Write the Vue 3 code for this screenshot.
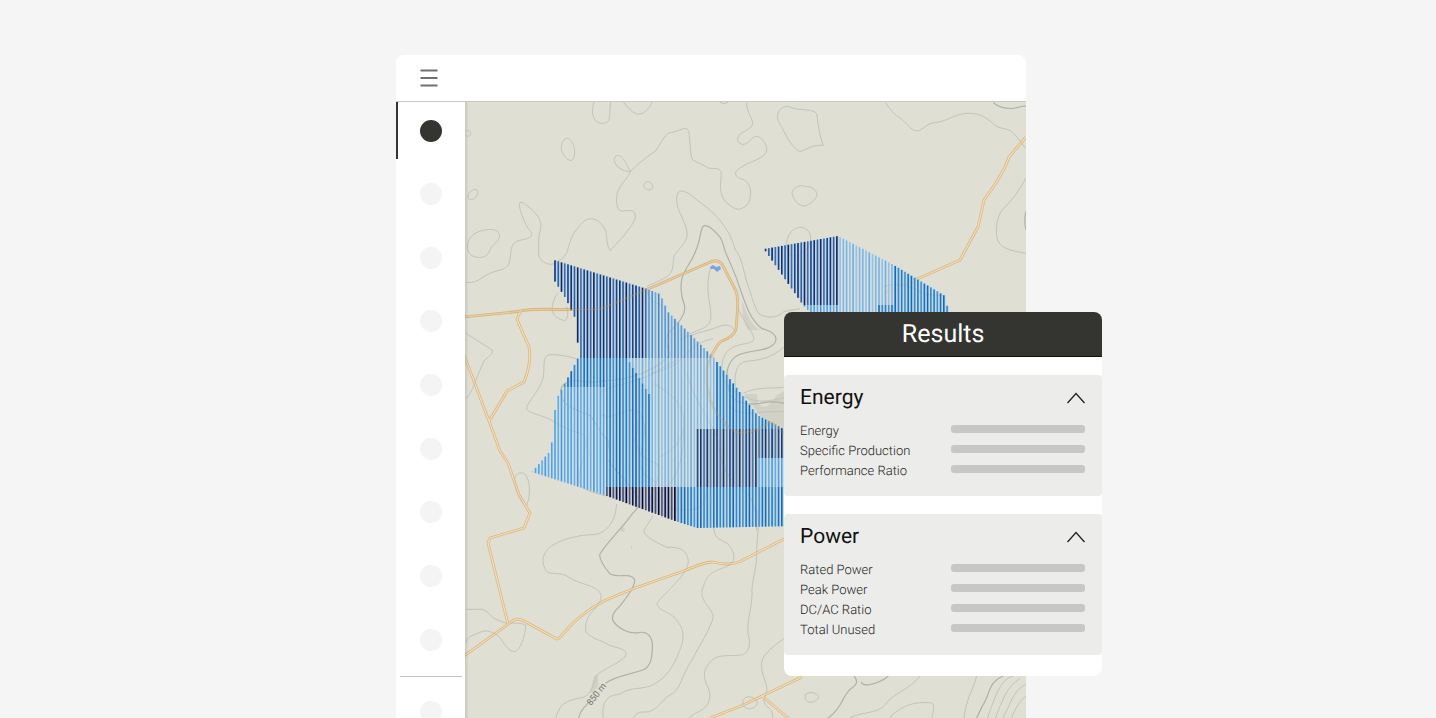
<script setup>
import { ref } from 'vue'

const tools = Array.from({ length: 9 }, (_, i) => i + 1)
const activeTool = ref(1)

const sections = ref([
  { id: 'energy', title: 'Energy', open: true, rows: ['Energy', 'Specific Production', 'Performance Ratio'] },
  { id: 'power', title: 'Power', open: true, rows: ['Rated Power', 'Peak Power', 'DC/AC Ratio', 'Total Unused'] },
])

// Contour tiles: map position of the tile origin, paths drawn at three units per map unit.
const contours = [
  {
    x: 460, y: 100,
    light: [
      'M402 6C396 24 395 44 404 58C414 73 436 74 446 62C452 48 448 28 452 6',
      'M490 6C502 20 512 36 530 42C548 46 568 28 576 6',
      'M780 6C788 12 798 12 804 6',
      'M304 146C304 128 312 114 322 115C336 118 344 138 344 156C344 172 338 184 330 181C318 177 306 162 304 146Z',
      'M551 258C552 248 560 243 568 246C578 250 581 260 576 267C570 272 555 270 551 258Z',
      'M24 288C26 278 38 266 48 269C58 274 52 288 44 294C34 302 24 302 24 288Z',
      'M18 94C24 88 32 92 32 100C32 108 24 112 18 106',
      'M22 442C20 420 38 398 66 392C88 386 112 386 118 402C124 422 96 432 90 450C82 470 70 474 52 472C34 470 24 460 22 442Z',
      'M18 547C50 552 60 534 90 520C112 510 132 512 144 496C156 474 148 450 160 432C174 416 200 422 213 409C220 396 206 392 198 374C186 352 174 314 180 308C186 302 208 322 220 334C234 348 246 362 242 384C234 408 236 440 236 468C244 488 268 498 284 490C302 478 314 474 320 458C328 436 330 420 340 402C354 382 370 360 386 357C406 352 426 368 436 390C442 410 440 440 450 451C458 446 478 422 492 406C506 388 528 362 526 348C524 322 500 334 484 333C468 330 469 300 471 282C478 254 506 232 512 214C536 190 560 170 586 154C600 136 608 112 624 100C642 96 656 92 670 86C690 82 687 102 689 120C692 142 690 164 698 180C714 190 728 192 744 204C762 208 778 200 784 218C784 244 778 262 784 280C790 306 820 328 838 328',
      'M512 214C496 216 474 206 466 190C458 174 468 162 480 168C498 180 500 200 512 214',
      'M840 102C831 110 831 126 840 130',
      'M840 204C830 210 826 216 827 222C828 228 834 233 840 236',
      'M560 560C590 544 618 536 630 522C644 504 636 478 646 462C664 440 674 430 680 414C688 388 664 352 654 324C646 296 650 272 666 273C688 276 708 300 732 316C764 340 790 370 808 402C816 420 822 436 826 450',
      'M752 504C746 520 744 540 744 558C742 590 756 630 752 660C744 690 702 690 672 712',
    ],
    dark: [
      'M708 450C724 416 720 378 734 377C748 376 766 394 782 414C790 430 792 440 794 450',
    ],
  },
  {
    x: 740, y: 100,
    light: [
      'M113 44C116 28 132 16 148 20C176 34 214 24 230 40C234 72 240 114 250 136C214 132 190 156 178 154C158 142 142 116 132 94C124 78 110 64 113 44Z',
      'M20 8C18 34 40 58 38 72C34 86 16 92 0 102',
      'M0 130C20 144 32 110 50 109C68 112 82 136 80 152C76 176 32 182 0 204',
      'M0 236C20 238 32 256 32 278C32 310 18 322 -2 328',
      'M156 278C160 262 180 254 194 259C216 258 234 274 231 286C224 304 204 318 190 318C172 316 158 294 156 278Z',
      'M140 430C140 406 160 380 184 382C208 386 218 406 208 434C198 460 170 474 150 466C142 454 138 444 140 430Z',
      'M436 8C452 30 466 46 480 54C498 66 514 94 532 93C550 90 560 68 586 68C626 62 650 40 682 40C724 38 744 58 766 76C784 90 806 82 820 100C836 114 846 132 858 146',
      'M858 234C838 270 818 300 790 326C770 350 768 380 770 410C776 446 812 452 858 460',
      'M428 560C470 548 510 554 540 576C570 592 600 582 616 590',
    ],
    dark: ['M760 8C778 22 804 28 826 24C838 20 850 18 858 18', 'M858 334C854 350 854 374 858 390'],
  },
  {
    x: 460, y: 250,
    light: [
      'M18 250C46 270 76 284 96 300C104 314 78 320 70 338C56 366 46 396 40 410C34 424 28 438 18 446',
      'M276 178C280 200 296 208 314 212C324 206 326 188 320 170',
      'M276 178C278 154 286 136 296 128',
      'M354 328C326 318 278 310 262 316C246 326 256 362 248 388C238 424 200 458 200 476C202 490 248 494 280 514C330 546 360 548 374 556C382 570 374 620 360 660C350 706 360 720 440 738',
      'M420 430C450 406 500 404 560 380C590 362 620 350 650 330',
      'M420 490C440 508 470 496 494 484C520 474 540 480 548 510C564 550 540 590 540 640C548 690 580 680 598 710',
      'M560 120C566 150 590 160 610 170',
    ],
    dark: [
      'M304 432C300 412 306 404 330 394C360 386 382 402 420 394C470 392 520 382 560 364C590 350 600 342 620 326',
      'M304 432C308 456 318 466 350 480C370 492 390 486 404 516C420 544 430 560 444 570C450 600 430 620 446 632',
    ],
  },
  {
    x: 620, y: 250,
    light: [
      'M346 0C364 18 370 60 380 94C394 134 400 162 414 188C434 208 474 204 490 186C506 180 520 180 540 176',
      'M354 176C376 222 398 244 402 266C400 284 360 278 334 294C308 312 304 340 306 366C310 400 340 434 400 450C430 458 460 450 492 444',
      'M346 410C342 370 350 338 380 334C420 330 450 326 492 292',
      'M180 270C220 250 260 244 290 232C318 220 336 224 346 246',
      'M370 430C410 410 450 416 492 412',
      'M330 470C370 508 420 478 492 486',
      'M200 370C210 410 230 450 260 500C280 540 300 570 300 610',
      'M100 400C150 430 180 450 190 500C200 550 170 600 120 620',
      'M94 370C140 362 180 340 210 300C230 280 260 270 280 266',
      'M30 480C60 500 60 540 40 580',
    ],
    dark: [
      'M228 0C218 30 200 50 192 70C178 96 182 136 194 168C198 204 160 230 142 256C126 292 166 304 140 326',
      'M314 0C330 40 346 70 356 104C376 160 390 210 426 236C456 244 474 256 466 276C446 310 380 296 346 320C318 346 318 374 324 406C326 456 370 468 420 460C450 454 474 454 492 460',
    ],
  },
  {
    x: 460, y: 430,
    light: [
      'M200 226C212 198 212 150 194 132C182 124 166 130 164 146C166 168 172 198 190 216',
      'M470 222C468 256 454 290 430 304C408 320 382 310 350 320C310 326 270 344 256 368C244 386 248 414 264 428C290 434 304 426 330 444C360 464 404 464 420 488C432 508 410 530 396 546C380 564 374 584 378 606C400 630 420 628 444 644C470 656 500 654 498 674C494 694 430 716 410 736C398 762 398 790 370 802C330 808 308 820 300 834L286 864',
      'M18 538L68 538C86 544 92 562 108 568C122 574 132 578 142 580C170 578 186 580 198 586C192 628 180 664 162 665C138 662 128 626 112 616C88 600 72 600 54 610C36 616 22 620 18 638',
      'M430 864C424 830 436 802 460 796L480 792',
    ],
    dark: [
      'M446 92C470 130 520 170 538 210C538 224 530 240 518 250C490 290 440 338 420 372C416 384 432 410 450 432C480 446 508 426 524 448C526 470 500 502 480 528C462 544 452 560 460 574C476 596 506 612 534 608C562 602 580 620 577 656C576 690 570 712 548 720C516 732 466 738 436 760',
      'M386 818C372 832 360 844 356 864',
    ],
  },
  {
    x: 620, y: 430,
    light: [
      'M100 256C84 284 72 294 72 308C90 330 120 342 140 352C178 350 204 360 205 396C204 436 120 500 110 522C120 548 150 540 174 576C200 610 186 644 178 664C162 708 140 742 100 764C70 780 30 770 0 792',
      'M282 290C280 324 300 328 322 340C346 366 348 390 330 404C300 422 264 418 250 470C232 510 274 528 280 560C272 596 242 640 216 690C184 736 182 784 148 796C120 814 118 834 86 846C66 846 50 844 40 864',
      'M410 240C420 270 412 310 410 360C412 410 398 440 396 480C398 530 380 570 384 610C392 640 390 662 370 674C340 680 304 672 282 686C246 714 252 740 258 760C270 780 274 800 264 820C250 846 218 848 208 864',
      'M492 626C460 650 422 674 424 710C430 750 444 764 440 786C428 810 430 822 444 832C456 840 458 850 458 864',
      'M372 806C382 796 410 800 412 820C406 842 372 842 368 822C368 814 370 808 372 806Z',
      'M556 794C570 782 592 788 596 802C588 820 562 822 556 806Z',
      'M190 0C194 80 170 150 130 180C110 220 140 240 200 240C240 240 260 220 260 180',
      'M300 60C310 140 340 150 370 180C400 200 410 240 410 300',
      'M50 0C40 60 70 90 110 100C130 130 100 170 90 210',
    ],
    dark: [],
  },
  {
    x: 780, y: 500,
    light: [
      'M420 528C390 570 336 580 314 616C290 642 240 636 208 654',
      'M456 654C466 612 460 608 444 608C400 606 364 616 328 654',
      'M590 528C580 570 560 590 552 654', 'M700 528C660 540 650 580 622 654',
      'M720 536C680 560 668 600 646 654', 'M738 552C696 574 690 620 668 654', 'M738 590C718 600 706 628 694 654',
    ],
    dark: ['M222 528C236 546 230 556 210 568C186 592 188 618 150 650L140 656', 'M244 546C248 560 276 556 300 544C314 538 322 532 328 524', 'M670 528C620 550 634 580 606 620L590 654'],
  },
]

const roads = [
  'M464 317L518 311.500Q530 308.500 555 309.500L598 309.500Q606 307 620 301L655 286L708 263Q717 258 722 264L736 291Q739 298 736 329Q735 336 720 342Q715 347 708 364Q704 382 712 405Q722 425 738 433Q760 432 769 422Q776 424 784 434',
  'M521 310L517 319Q522 332 529 347Q532 362 524 382L507 391Q502 400 489 421',
  'M464 355L489 421L500 451L508 463L519 495L530 513L524 528L490 538L488 543L508 624',
  'M464 656L514 620Q518 618 524 621L555 638Q558 641 562 635L574 622Q590 608 606 600L635 588L684 571Q704 562 713 562Q728 566 739 562L794 534',
  'M710 718L741 706L762 696L802 677',
  'M762 696L788 718',
  'M1026 137L1009 157Q1004 173 984 200Q980 218 978 227L960 260L915 280L882 294',
]

const hatches = {
  navy: { base: '#b7d3ee', bars: ['#0f3272', '#2f5f9f', '#14265a', '#3a6cab', '#1c4284'] },
  steel: { base: '#c3dcee', bars: ['#4f90c9', '#73a7d4', '#4788c2', '#6a9fce', '#5a98cf'] },
  blue: { base: '#a4dcff', bars: ['#1c68b0', '#4c81b3', '#2b7cc0', '#5a8bb8', '#2470b8'] },
  sky: { base: '#bde3f9', bars: ['#5aa0da', '#74a9d2', '#4f97d6', '#6fa8d8', '#5a9fdc'] },
  pale: { base: '#c8e4f4', bars: ['#80b2da', '#9cbcd4', '#78acd8', '#a0bed4', '#84b4dc'] },
  slate: { base: '#accdea', bars: ['#1c386c', '#566d8c', '#1a376c', '#5f748e', '#28487c'] },
  black: { base: '#b4bce2', bars: ['#0e1832', '#434e5e', '#060a20', '#4e5866', '#141a3c'] },
}

const blocks = [
  { fill: 'navy', points: [[554, 260], [647, 289], [647, 358], [578, 358], [578, 347], [576, 320], [566, 299], [554, 280]] },
  { fill: 'steel', points: [[647, 289], [660, 294], [668, 312], [714, 358], [647, 358]] },
  { fill: 'blue', points: [[578, 358], [627, 358], [651, 397], [651, 487], [604, 487], [604, 387], [563, 387]] },
  { fill: 'sky', points: [[563, 387], [604, 387], [604, 495], [532, 472], [551, 450], [556, 400]] },
  { fill: 'pale', points: [[627, 358], [714, 358], [714, 429], [697, 429], [697, 487], [651, 487], [651, 397]] },
  { fill: 'blue', points: [[714, 358], [757, 415], [784, 429], [714, 429]] },
  { fill: 'slate', points: [[697, 429], [784, 429], [784, 458], [757, 458], [757, 487], [697, 487]] },
  { fill: 'sky', points: [[757, 458], [796, 458], [796, 487], [757, 487]] },
  { fill: 'black', points: [[604, 487], [675, 487], [675, 521], [604, 495]] },
  { fill: 'blue', points: [[675, 487], [796, 487], [796, 526], [697, 528], [675, 521]] },
  { fill: 'navy', points: [[764, 249], [838, 236], [838, 305], [803, 305]] },
  { fill: 'sky', points: [[803, 305], [838, 305], [838, 320], [817, 320]] },
  { fill: 'pale', points: [[838, 236], [892, 264], [892, 305], [877, 305], [877, 320], [838, 320]] },
  { fill: 'blue', points: [[892, 264], [945, 296], [950, 320], [877, 320], [877, 305], [892, 305]] },
]

const PITCH = 3.24

// Heights at which a vertical line at x crosses the outline of a block.
function crossings(points, x) {
  const ys = []
  points.forEach(([x1, y1], i) => {
    const [x2, y2] = points[(i + 1) % points.length]
    if (x1 <= x !== x2 <= x) ys.push(y1 + ((x - x1) / (x2 - x1)) * (y2 - y1))
  })
  return ys.sort((a, b) => a - b)
}

// Rows of solar panels, one bar for each pitch step inside each block.
const panels = blocks.flatMap(({ fill, points }) => {
  const { base, bars } = hatches[fill]
  const out = []
  for (let k = -8; k < 124; k++) {
    const x = 554.2 + k * PITCH
    const ys = crossings(points, x + 0.8)
    for (let i = 0; i + 1 < ys.length; i += 2) {
      const y = ys[i]
      const h = ys[i + 1] - y
      out.push({ x, y, h, w: 2.6, color: base })
      out.push({ x, y, h, w: 1.6, color: bars[(k + 10) % 5] })
    }
  }
  return out
})
</script>

<template>
  <main class="stage">
    <div class="window">
      <header class="topbar">
        <button class="menu" type="button" aria-label="Menu">
          <svg viewBox="0 0 18 18" width="18" height="18" aria-hidden="true">
            <path d="M0.500 1.500H17.500M0.500 9H17.500M0.500 16.500H17.500" />
          </svg>
        </button>
      </header>

      <div class="body">
        <nav class="rail" aria-label="Tools">
          <div class="tools">
            <button
              v-for="tool in tools"
              :key="tool"
              type="button"
              class="tool"
              :class="{ active: tool === activeTool }"
              :aria-label="`Tool ${tool}`"
              @click="activeTool = tool"
            >
              <span class="dot"></span>
            </button>
          </div>
          <hr class="divider" />
          <button type="button" class="tool" aria-label="Settings"><span class="dot"></span></button>
        </nav>

        <svg class="map" viewBox="465 102 561 616" preserveAspectRatio="xMinYMin slice" role="img" aria-label="Site map">
          <defs>
            <linearGradient id="edge">
              <stop offset="0" stop-color="#7b8474" stop-opacity="0.250" />
              <stop offset="1" stop-color="#7b8474" stop-opacity="0" />
            </linearGradient>
          </defs>

          <rect x="465" y="102" width="561" height="616" fill="#e0dfd3" />
          <g fill="#c9cbbd" opacity="0.650">
            <path d="M742 300Q750 326 760 330L748 330Q742 322 742 300ZM744 394L757 394L758 404Q768 412 776 396L784 391V428L762 418Z" />
            <path d="M594 676L598 675V686L593 694L590 692ZM621 527L625 528L624 532L620 531ZM631 545L632 546V549H631Z" />
          </g>

          <g v-for="(tile, i) in contours" :key="i" :transform="`translate(${tile.x} ${tile.y}) scale(0.3333)`">
            <path v-for="(d, n) in tile.light" :key="`l${n}`" class="contour" :d="d" />
            <path v-for="(d, n) in tile.dark" :key="`d${n}`" class="contour index" :d="d" />
          </g>

          <path v-for="(d, i) in roads" :key="`r${i}`" class="road-edge" :d="d" />
          <path v-for="(d, i) in roads" :key="`c${i}`" class="road-core" :d="d" />

          <rect v-for="(p, i) in panels" :key="`p${i}`" :x="p.x" :y="p.y" :width="p.w" :height="p.h" :fill="p.color" />

          <g v-for="(tile, i) in contours" :key="`t${i}`" :transform="`translate(${tile.x} ${tile.y}) scale(0.3333)`">
            <path v-for="(d, n) in tile.light" :key="`s${n}`" class="contour faint" :d="d" />
            <path v-for="(d, n) in tile.dark" :key="`f${n}`" class="contour faint" :d="d" />
          </g>
          <path class="road-faint" :d="roads[0]" />

          <path d="M710 267L713 265L716 267L720 266L721 269L717 272L714 269L711 269Z" fill="#77a5dc" />
          <text class="elevation" transform="translate(591 706) rotate(-52)">850 m</text>
          <rect x="465" y="102" width="4" height="616" fill="url(#edge)" />
        </svg>
      </div>

      <aside class="results">
        <h1 class="results-title">Results</h1>
        <section v-for="s in sections" :key="s.id" class="card">
          <h2 class="card-head">
            <span>{{ s.title }}</span>
            <button type="button" class="toggle" :aria-label="`Toggle ${s.title}`" :aria-expanded="s.open" @click="s.open = !s.open">
              <svg viewBox="0 0 18 12" width="18" height="12" aria-hidden="true"><path d="M0.500 11L9 1.500L17.500 11" /></svg>
            </button>
          </h2>
          <dl v-if="s.open" class="rows">
            <div v-for="row in s.rows" :key="row" class="row">
              <dt>{{ row }}</dt>
              <dd class="bar"></dd>
            </div>
          </dl>
        </section>
      </aside>
    </div>
  </main>
</template>

<style>
body {
  background: #f5f5f5;
}
</style>

<style scoped>
* {
  box-sizing: border-box;
}
.stage {
  display: grid;
  grid-template-columns: 396fr 630fr 410fr;
  height: 100vh;
  padding-top: 55px;
  overflow: hidden;
  background: #f5f5f5;
  font-family: Roboto, "Liberation Sans", sans-serif;
  text-rendering: geometricPrecision;
}
.window {
  grid-column: 2;
  position: relative;
  display: flex;
  flex-direction: column;
  min-height: 0;
  background: #fff;
  border-radius: 8px 8px 0 0;
}
button {
  padding: 0;
  border: 0;
  background: none;
  cursor: pointer;
}
.topbar {
  flex: none;
  display: flex;
  align-items: center;
  height: 47px;
  padding-left: 24px;
  border-bottom: 1px solid #c6c9c2;
}
.menu {
  display: flex;
}
.menu path {
  stroke: #70706c;
  stroke-width: 2.2;
}
.body {
  flex: 1;
  display: flex;
  min-height: 0;
  overflow: hidden;
}
.rail {
  flex: none;
  width: 69px;
}
.tools {
  display: flex;
  flex-direction: column;
  justify-content: space-between;
  height: 566px;
}
.tool {
  display: flex;
  align-items: center;
  justify-content: center;
  width: 100%;
  height: 57px;
  border-right: 2px solid transparent;
  border-left: 2px solid transparent;
}
.tool.active {
  border-left-color: #343530;
}
.dot {
  width: 22px;
  height: 22px;
  border-radius: 50%;
  background: #f4f4f4;
}
.active .dot {
  background: #343530;
}
.divider {
  margin: 8px 3px 6px 4px;
  border: 0;
  border-top: 1px solid #c4c4c4;
}
.map {
  flex: 1;
  min-width: 0;
  height: 100%;
}
.contour {
  fill: none;
  stroke: #cccec2;
  stroke-width: 3;
}
.index {
  stroke: #b5b8ac;
  stroke-width: 3.6;
}
.faint {
  stroke: #60757c;
  stroke-opacity: 0.1;
}
.road-edge {
  fill: none;
  stroke: #e0b578;
  stroke-width: 2.8;
  stroke-linejoin: round;
}
.road-core {
  fill: none;
  stroke: #ecdfc4;
  stroke-width: 1.2;
  stroke-linejoin: round;
}
.road-faint {
  fill: none;
  stroke: #c9a46c;
  stroke-opacity: 0.25;
  stroke-width: 2;
}
.elevation {
  font-size: 9px;
  fill: #73756d;
}
.results {
  position: absolute;
  top: 257px;
  left: 61.6%;
  display: flex;
  flex-direction: column;
  gap: 18px;
  width: 318px;
  padding-bottom: 21px;
  overflow: hidden;
  background: #fff;
  border-radius: 8px;
  color: #1c1c1a;
}
.results-title {
  height: 45px;
  margin: 0;
  border-bottom: 1px solid #11120f;
  background: #343530;
  color: #fff;
  font-size: 25px;
  font-weight: 400;
  line-height: 46px;
  text-align: center;
}
.card {
  padding: 8px 17px 14px 16px;
  border-radius: 4px;
  background: #ececeb;
}
.card-head {
  display: flex;
  align-items: center;
  justify-content: space-between;
  margin: 0 0 9px;
  color: #111;
  font-size: 21px;
  font-weight: 400;
  line-height: 30px;
}
.toggle {
  display: flex;
}
.toggle path {
  fill: none;
  stroke: #222;
  stroke-width: 1.3;
}
.rows {
  margin: 0;
}
.row {
  display: flex;
  justify-content: space-between;
  height: 20px;
  font-size: 13px;
  font-weight: 300;
  line-height: 20px;
}
.bar {
  width: 134px;
  height: 8px;
  margin: 3px 0 0;
  border-radius: 3px;
  background: #c7c7c6;
}
</style>
